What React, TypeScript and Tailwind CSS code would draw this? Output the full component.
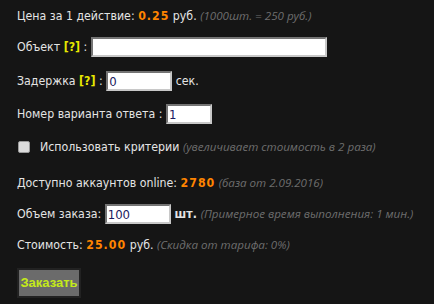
import React from "react";

const Orange = ({ children }: { children: React.ReactNode }) => (
  <b className="font-bold text-[#ff8400] tracking-[1px]">{children}</b>
);

const Note = ({ children }: { children: React.ReactNode }) => (
  <i className="italic text-[#6e6e6e] text-[11.6px] [font-family:'Open_Sans',sans-serif]">{children}</i>
);

const Q = () => <span className="font-bold text-[#e8e800]">[?]</span>;

const Input = ({ w, value }: { w: string; value: string }) => (
  <input
    readOnly
    value={value}
    className={`${w} h-[20px] bg-white border-2 [border-style:inset] border-[#c8c8c8] px-[1px] text-[13px] text-[#1a1a60] outline-none [font-family:'DejaVu_Sans_Condensed','DejaVu_Sans',sans-serif]`}
  />
);

export default function App() {
  return (
    <div className="w-[434px] h-[304px] bg-[#151515] text-[#e4e4e4] text-[12.25px] [font-family:'DejaVu_Sans_Condensed','DejaVu_Sans',sans-serif] pl-[17px] pt-[6px] flex flex-col">
      <div className="h-[20px] flex items-center whitespace-pre">
        <span>Цена за 1 действие: </span>
        <Orange>0.25</Orange>
        <span> руб. </span>
        <Note>(1000шт. = 250 руб.)</Note>
      </div>
      <div className="h-[20px] mt-[11px] flex items-center whitespace-pre">
        <span>Объект </span>
        <Q />
        <span> : </span>
        <Input w="w-[236px]" value="" />
      </div>
      <div className="h-[20px] mt-[14px] flex items-center whitespace-pre">
        <span>Задержка </span>
        <Q />
        <span> : </span>
        <Input w="w-[66px]" value="0" />
        <span> сек.</span>
      </div>
      <div className="h-[20px] mt-[13px] flex items-center whitespace-pre">
        <span>Номер варианта ответа : </span>
        <Input w="w-[46px]" value="1" />
      </div>
      <div className="h-[20px] mt-[13px] flex items-center whitespace-pre">
        <span className="ml-[1px] w-[12px] h-[12px] bg-[#dcdcdc] border border-[#9a9a9a] rounded-[2px] mr-[10px]" />
        <span>Использовать критерии </span>
        <Note>(увеличивает стоимость в 2 раза)</Note>
      </div>
      <div className="h-[20px] mt-[16px] flex items-center whitespace-pre">
        <span>Доступно аккаунтов online: </span>
        <Orange>2780</Orange>
        <span> </span>
        <Note>(база от 2.09.2016)</Note>
      </div>
      <div className="h-[20px] mt-[11px] flex items-center whitespace-pre">
        <span>Объем заказа: </span>
        <Input w="w-[66px]" value="100" />
        <span className="font-bold"> шт. </span>
        <Note>(Примерное время выполнения: 1 мин.)</Note>
      </div>
      <div className="h-[20px] mt-[11px] flex items-center whitespace-pre">
        <span>Стоимость: </span>
        <Orange>25.00</Orange>
        <span> руб. </span>
        <Note>(Скидка от тарифа: 0%)</Note>
      </div>
      <div className="mt-[13px]">
        <button className="w-[64px] h-[30px] bg-[#6b6b6b] border-2 border-[#222] text-[#c4ea1a] font-bold text-[13px] [font-family:'Liberation_Sans',Arial,sans-serif]">
          Заказать
        </button>
      </div>
    </div>
  );
}
